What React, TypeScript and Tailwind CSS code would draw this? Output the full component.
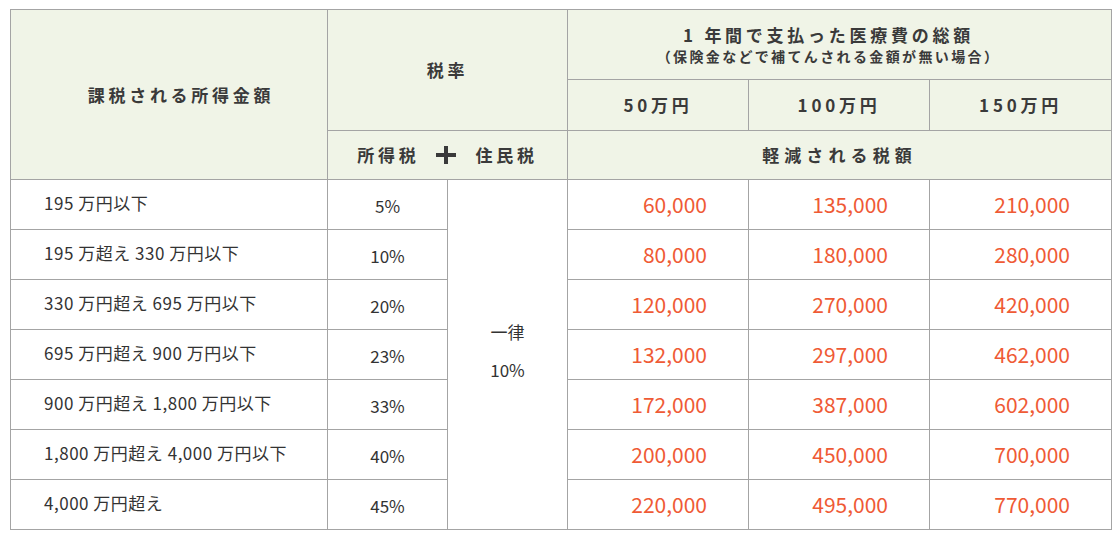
import React from "react";

const rows = [
  { range: "195 万円以下", rate: "5%", amounts: ["60,000", "135,000", "210,000"] },
  { range: "195 万超え 330 万円以下", rate: "10%", amounts: ["80,000", "180,000", "280,000"] },
  { range: "330 万円超え 695 万円以下", rate: "20%", amounts: ["120,000", "270,000", "420,000"] },
  { range: "695 万円超え 900 万円以下", rate: "23%", amounts: ["132,000", "297,000", "462,000"] },
  { range: "900 万円超え 1,800 万円以下", rate: "33%", amounts: ["172,000", "387,000", "602,000"] },
  { range: "1,800 万円超え 4,000 万円以下", rate: "40%", amounts: ["200,000", "450,000", "700,000"] },
  { range: "4,000 万円超え", rate: "45%", amounts: ["220,000", "495,000", "770,000"] },
];

const font = { fontFamily: '"Noto Sans CJK JP", "Noto Sans", sans-serif' };

// heavy plus sign between 所得税 and 住民税
function PlusMark() {
  return (
    <svg width="20" height="18" viewBox="0 0 20 18" className="inline-block">
      <rect x="0" y="7" width="20" height="4" fill="#3a3a3a" />
      <rect x="8" y="0" width="4" height="18" fill="#3a3a3a" />
    </svg>
  );
}

export default function App() {
  const th = "border border-[#a4a4a4] bg-[#f0f4e7] text-[#3a3a3a] font-bold text-center align-middle p-0";
  const td = "border border-[#a4a4a4] bg-white p-0 align-middle";
  const head = "text-[17px] tracking-[0.22em]";

  return (
    <div className="min-h-screen bg-white pt-[9px] pl-[10px]" style={font}>
      <table className="table-fixed border-collapse w-[1101px]">
        <colgroup>
          <col className="w-[317px]" />
          <col className="w-[120px]" />
          <col className="w-[120px]" />
          <col className="w-[181px]" />
          <col className="w-[181px]" />
          <col className="w-[182px]" />
        </colgroup>
        <thead>
          <tr className="h-[70px]">
            <th rowSpan={3} className={`${th} ${head} pl-[24px]`}>
              課税される所得金額
            </th>
            <th rowSpan={2} colSpan={2} className={`${th} ${head}`}>
              税率
            </th>
            <th colSpan={3} className={`${th} pr-[22px]`}>
              <div className={`${head} leading-[23px]`}>1 年間で支払った医療費の総額</div>
              <div className="text-[14px] tracking-[0.17em] leading-[20px]">（保険金などで補てんされる金額が無い場合）</div>
            </th>
          </tr>
          <tr className="h-[51px]">
            <th className={`${th} ${head}`}>50万円</th>
            <th className={`${th} ${head}`}>100万円</th>
            <th className={`${th} ${head}`}>150万円</th>
          </tr>
          <tr className="h-[49px]">
            <th colSpan={2} className={`${th} ${head}`}>
              <span className="inline-flex items-center gap-[16px]">
                <span>所得税</span>
                <PlusMark />
                <span className="pl-[4px]">住民税</span>
              </span>
            </th>
            <th colSpan={3} className={`${th} text-[17px] tracking-[0.3em]`}>
              軽減される税額
            </th>
          </tr>
        </thead>
        <tbody>
          {rows.map((row, i) => (
            <tr key={row.range} className="h-[50px]">
              <td className={`${td} pl-[33px] pb-[3px] text-[17px] tracking-[0.03em] text-[#333]`}>
                {row.range}
              </td>
              <td className={`${td} pt-[3px] text-center text-[17px] text-[#333]`}>
                {row.rate}
              </td>
              {i === 0 && (
                <td rowSpan={rows.length} className={`${td} text-center text-[17px] text-[#333]`}>
                  <div className="flex flex-col items-center pb-[10px]">
                    <span className="leading-[40px]">一律</span>
                    <span className="leading-[36px]">10%</span>
                  </div>
                </td>
              )}
              {row.amounts.map((amount, j) => (
                <td
                  key={j}
                  className={`${td} pr-[41px] text-right text-[21px] text-[#ef5a35]`}
                >
                  {amount}
                </td>
              ))}
            </tr>
          ))}
        </tbody>
      </table>
    </div>
  );
}
